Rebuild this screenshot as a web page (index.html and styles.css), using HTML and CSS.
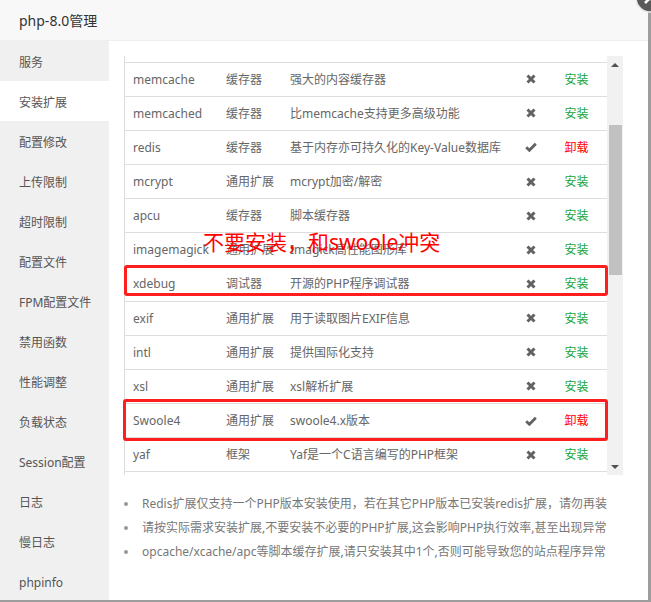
FILE: index.html
```html
<!DOCTYPE html>
<html lang="zh-CN">
<head>
<meta charset="utf-8">
<title>php-8.0管理</title>
<link rel="stylesheet" href="styles.css">
</head>
<body>
<div class="dialog">
  <div class="header">php-8.0管理</div>
  <div class="main">
    <nav class="side">
      <div class="side-item">服务</div>
      <div class="side-item active">安装扩展</div>
      <div class="side-item">配置修改</div>
      <div class="side-item">上传限制</div>
      <div class="side-item">超时限制</div>
      <div class="side-item">配置文件</div>
      <div class="side-item">FPM配置文件</div>
      <div class="side-item">禁用函数</div>
      <div class="side-item">性能调整</div>
      <div class="side-item">负载状态</div>
      <div class="side-item">Session配置</div>
      <div class="side-item">日志</div>
      <div class="side-item">慢日志</div>
      <div class="side-item">phpinfo</div>
    </nav>
    <section class="content">
      <div class="scrollbox">
        <div class="tablewrap">
          <table class="ext">
            <colgroup>
              <col class="c-name"><col class="c-type"><col class="c-desc"><col class="c-stat"><col class="c-act">
            </colgroup>
            <tbody>
              <tr><td>memcache</td><td>缓存器</td><td>强大的内容缓存器</td><td class="stat"><svg class="ic-x" viewBox="0 0 10 10"><path d="M1.5 1.5L8.5 8.5M8.5 1.5L1.5 8.5"/></svg></td><td class="act"><span class="ok">安装</span></td></tr>
              <tr><td>memcached</td><td>缓存器</td><td>比memcache支持更多高级功能</td><td class="stat"><svg class="ic-x" viewBox="0 0 10 10"><path d="M1.5 1.5L8.5 8.5M8.5 1.5L1.5 8.5"/></svg></td><td class="act"><span class="ok">安装</span></td></tr>
              <tr><td>redis</td><td>缓存器</td><td>基于内存亦可持久化的Key-Value数据库</td><td class="stat"><svg class="ic-v" viewBox="0 0 12 10"><path d="M1.2 5.2L4.4 8.3L10.8 1.8"/></svg></td><td class="act"><span class="del">卸载</span></td></tr>
              <tr><td>mcrypt</td><td>通用扩展</td><td>mcrypt加密/解密</td><td class="stat"><svg class="ic-x" viewBox="0 0 10 10"><path d="M1.5 1.5L8.5 8.5M8.5 1.5L1.5 8.5"/></svg></td><td class="act"><span class="ok">安装</span></td></tr>
              <tr><td>apcu</td><td>缓存器</td><td>脚本缓存器</td><td class="stat"><svg class="ic-x" viewBox="0 0 10 10"><path d="M1.5 1.5L8.5 8.5M8.5 1.5L1.5 8.5"/></svg></td><td class="act"><span class="ok">安装</span></td></tr>
              <tr><td>imagemagick</td><td>通用扩展</td><td>Imagick高性能图形库</td><td class="stat"><svg class="ic-x" viewBox="0 0 10 10"><path d="M1.5 1.5L8.5 8.5M8.5 1.5L1.5 8.5"/></svg></td><td class="act"><span class="ok">安装</span></td></tr>
              <tr><td>xdebug</td><td>调试器</td><td>开源的PHP程序调试器</td><td class="stat"><svg class="ic-x" viewBox="0 0 10 10"><path d="M1.5 1.5L8.5 8.5M8.5 1.5L1.5 8.5"/></svg></td><td class="act"><span class="ok">安装</span></td></tr>
              <tr><td>exif</td><td>通用扩展</td><td>用于读取图片EXIF信息</td><td class="stat"><svg class="ic-x" viewBox="0 0 10 10"><path d="M1.5 1.5L8.5 8.5M8.5 1.5L1.5 8.5"/></svg></td><td class="act"><span class="ok">安装</span></td></tr>
              <tr><td>intl</td><td>通用扩展</td><td>提供国际化支持</td><td class="stat"><svg class="ic-x" viewBox="0 0 10 10"><path d="M1.5 1.5L8.5 8.5M8.5 1.5L1.5 8.5"/></svg></td><td class="act"><span class="ok">安装</span></td></tr>
              <tr><td>xsl</td><td>通用扩展</td><td>xsl解析扩展</td><td class="stat"><svg class="ic-x" viewBox="0 0 10 10"><path d="M1.5 1.5L8.5 8.5M8.5 1.5L1.5 8.5"/></svg></td><td class="act"><span class="ok">安装</span></td></tr>
              <tr><td>Swoole4</td><td>通用扩展</td><td>swoole4.x版本</td><td class="stat"><svg class="ic-v" viewBox="0 0 12 10"><path d="M1.2 5.2L4.4 8.3L10.8 1.8"/></svg></td><td class="act"><span class="del">卸载</span></td></tr>
              <tr class="last"><td>yaf</td><td>框架</td><td>Yaf是一个C语言编写的PHP框架</td><td class="stat"><svg class="ic-x" viewBox="0 0 10 10"><path d="M1.5 1.5L8.5 8.5M8.5 1.5L1.5 8.5"/></svg></td><td class="act"><span class="ok">安装</span></td></tr>
            </tbody>
          </table>
        </div>
        <div class="scrollbar">
          <span class="arrow-up"></span>
          <div class="thumb"></div>
          <span class="arrow-down"></span>
        </div>
      </div>
      <ul class="notes">
        <li>Redis扩展仅支持一个PHP版本安装使用，若在其它PHP版本已安装redis扩展，请勿再装</li>
        <li>请按实际需求安装扩展,不要安装不必要的PHP扩展,这会影响PHP执行效率,甚至出现异常</li>
        <li>opcache/xcache/apc等脚本缓存扩展,请只安装其中1个,否则可能导致您的站点程序异常</li>
      </ul>
      <div class="annot">不要安装，和swoole冲突</div>
      <div class="mark mark-xdebug"></div>
      <div class="mark mark-swoole"></div>
    </section>
  </div>
  <div class="close">
    <svg viewBox="0 0 30 30" width="30" height="30"><circle cx="15" cy="15" r="14" fill="#5a5a5a" stroke="#e8e8e8" stroke-width="1.5"/><path d="M10 10L20 20M20 10L10 20" stroke="#fff" stroke-width="2.6"/></svg>
  </div>
</div>
</body>
</html>
```

FILE: styles.css
```css
* { box-sizing: border-box; }
html, body { margin: 0; padding: 0; }
body {
  width: 651px;
  height: 602px;
  overflow: hidden;
  background: #9d9d9d;
  font-family: "Noto Sans", "Noto Sans CJK SC", sans-serif;
}
.dialog {
  position: relative;
  width: 648px;
  height: 600px;
  background: #fff;
  display: flex;
  flex-direction: column;
}
.header {
  flex: none;
  height: 41px;
  padding-top: 2px;
  line-height: 38px;
  padding-left: 19px;
  background: #f8f8f8;
  border-bottom: 1px solid #eee;
  font-size: 14px;
  color: #333;
}
.main {
  flex: 1;
  display: flex;
  min-height: 0;
}
.side {
  flex: none;
  width: 109px;
  background: #f0f0f0;
}
.side-item {
  height: 40px;
  padding-top: 3px;
  line-height: 37px;
  padding-left: 19px;
  font-size: 12px;
  color: #555;
  white-space: nowrap;
}
.side-item.active { background: #fff; }
.content {
  flex: 1;
  position: relative;
  padding: 15px 25px 0 15px;
}
.scrollbox {
  display: flex;
  height: 419px;
}
.tablewrap {
  flex: 1;
  border-left: 1px solid #ddd;
  overflow: hidden;
  padding-top: 5.6px;
}
.ext {
  width: 100%;
  border-collapse: collapse;
  table-layout: fixed;
  font-size: 12px;
  color: #666;
}
.c-name { width: 93px; }
.c-type { width: 64px; }
.c-desc { width: 233px; }
.c-stat { width: 31px; }
.c-act { width: 61px; }
.ext td {
  padding: 8px;
  line-height: 17.142857px;
  border-top: 1px solid #ddd;
  white-space: nowrap;
  overflow: hidden;
  vertical-align: middle;
}
.ext tr.last td { border-bottom: 1px solid #ddd; }
.ext td.stat, .ext td.act { text-align: center; }
.ext td.stat { padding: 8px 0; }
.ic-x, .ic-v {
  display: block;
  margin: 0 auto;
  fill: none;
  stroke: #626262;
}
.ic-x { width: 10px; height: 10px; stroke-width: 3; }
.ic-v { width: 12px; height: 10px; stroke-width: 2.8; }
.ok { color: #20a53a; }
.del { color: #ff0000; }
.scrollbar {
  flex: none;
  width: 16px;
  background: #f1f1f1;
  display: flex;
  flex-direction: column;
  align-items: center;
}
.arrow-up, .arrow-down {
  width: 0;
  height: 0;
  border-left: 4px solid transparent;
  border-right: 4px solid transparent;
}
.arrow-up {
  margin-top: 7px;
  border-bottom: 4px solid #505050;
}
.arrow-down {
  margin-top: auto;
  margin-bottom: 6px;
  border-top: 4px solid #505050;
}
.thumb {
  margin-top: 58px;
  width: 13px;
  height: 150px;
  background: #c1c1c1;
}
.notes {
  margin: 17px 0 0;
  padding: 0;
  list-style: none;
  font-size: 12px;
  color: #777;
}
.notes li {
  display: flex;
  align-items: center;
  line-height: 24px;
  white-space: nowrap;
}
.notes li::before {
  content: "";
  flex: none;
  width: 4px;
  height: 4px;
  border-radius: 50%;
  background: #999;
  margin-right: 14px;
}
.annot {
  position: absolute;
  left: 94px;
  top: 191px;
  font-size: 21px;
  line-height: 21px;
  color: #ff0000;
  white-space: nowrap;
}
.mark {
  position: absolute;
  border: 3px solid #ff1e1e;
  border-radius: 3px;
}
.mark-xdebug { left: 15px; top: 224px; width: 484px; height: 31px; }
.mark-swoole { left: 14px; top: 358px; width: 485px; height: 42px; }
.close {
  position: absolute;
  left: 635px;
  top: -17px;
  width: 30px;
  height: 30px;
}
.close svg { display: block; }
```
